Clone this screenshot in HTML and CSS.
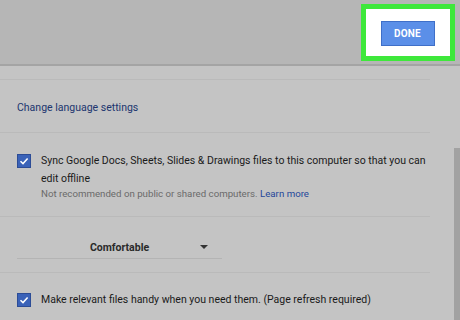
FILE: index.html
```html
<!DOCTYPE html>
<html lang="en">
<head>
    <meta charset="UTF-8">
    <title>Settings</title>
    <link rel="stylesheet" href="styles.css">
</head>
<body>
    <div class="header">
        <div class="highlight">
            <button class="done">DONE</button>
        </div>
    </div>

    <div class="content">
        <div class="section top"></div>

        <div class="section lang">
            <a href="#" class="link">Change language settings</a>
        </div>

        <div class="section offline">
            <div class="check-row">
                <span class="checkbox">
                    <svg width="10" height="10" viewBox="0 0 10 10"><path d="M1.5 5.2 L4 7.6 L8.6 2.4" fill="none" stroke="#fff" stroke-width="1.5"/></svg>
                </span>
                <div class="check-text">
                    <div>Sync Google Docs, Sheets, Slides &amp; Drawings files to this computer so that you can edit offline</div>
                    <div class="hint">Not recommended on public or shared computers. <a href="#" class="learn">Learn more</a></div>
                </div>
            </div>
        </div>

        <div class="section density">
            <div class="select">
                <span class="select-value">Comfortable</span>
                <span class="arrow"></span>
            </div>
        </div>

        <div class="section last">
            <div class="check-row">
                <span class="checkbox">
                    <svg width="10" height="10" viewBox="0 0 10 10"><path d="M1.5 5.2 L4 7.6 L8.6 2.4" fill="none" stroke="#fff" stroke-width="1.5"/></svg>
                </span>
                <div class="check-text">Make relevant files handy when you need them. (Page refresh required)</div>
            </div>
        </div>

        <div class="scrollbar"></div>
    </div>
</body>
</html>
```

FILE: styles.css
```css
body { margin: 0; background: #c4c4c4; font-family: Roboto, "Liberation Sans", sans-serif; font-size: 10.5px; color: #1e1e1e; overflow: hidden; }
.header { height: 64px; background: #b6b6b6; border-bottom: 2px solid #a4a4a4; display: flex; justify-content: flex-end; align-items: flex-start; }
.highlight { margin: 4px 5px 0 0; width: 84px; height: 47px; border: 5px solid #3ee83b; background: #fff; display: flex; align-items: center; justify-content: center; box-sizing: content-box; }
.done { width: 54px; height: 25px; border: 1px solid #3f6fc8; background: #5b8fe8; color: #fff; font-family: Roboto, sans-serif; font-weight: bold; font-size: 10px; letter-spacing: 0.2px; margin: 1px 1px 0 0; padding: 0; }
.content { position: relative; height: 254px; overflow: hidden; }
.section { width: 430px; border-bottom: 1px solid #bababa; box-sizing: border-box; padding-left: 17px; }
.top { height: 14px; }
.lang { height: 53px; padding-top: 21px; }
.link { color: #20356f; text-decoration: none; }
.offline { height: 84px; padding-top: 21px; }
.check-row { display: flex; align-items: flex-start; gap: 10px; }
.checkbox { width: 14px; height: 14px; flex: none; background: #3a62b8; border: 1px solid #2c4c96; box-sizing: border-box; display: flex; align-items: center; justify-content: center; }
.check-text { line-height: 18px; margin-top: -2px; width: 395px; color: #1a1a1a; }
.hint { color: #6a6a6a; font-size: 9.7px; line-height: 12px; }
.learn { color: #25479a; text-decoration: none; }
.density { height: 56px; padding-top: 19px; }
.select { width: 205px; height: 22px; border-bottom: 1px solid #b4b4b4; display: flex; align-items: center; justify-content: center; position: relative; }
.select-value { font-weight: bold; color: #2a2a2a; }
.arrow { position: absolute; left: 183px; top: 9px; width: 0; height: 0; border-left: 4px solid transparent; border-right: 4px solid transparent; border-top: 4px solid #333; }
.last { border-bottom: none; padding-top: 20px; }
.scrollbar { position: absolute; right: 0; top: 82px; width: 6px; height: 200px; background: #a2a2a2; }
```
